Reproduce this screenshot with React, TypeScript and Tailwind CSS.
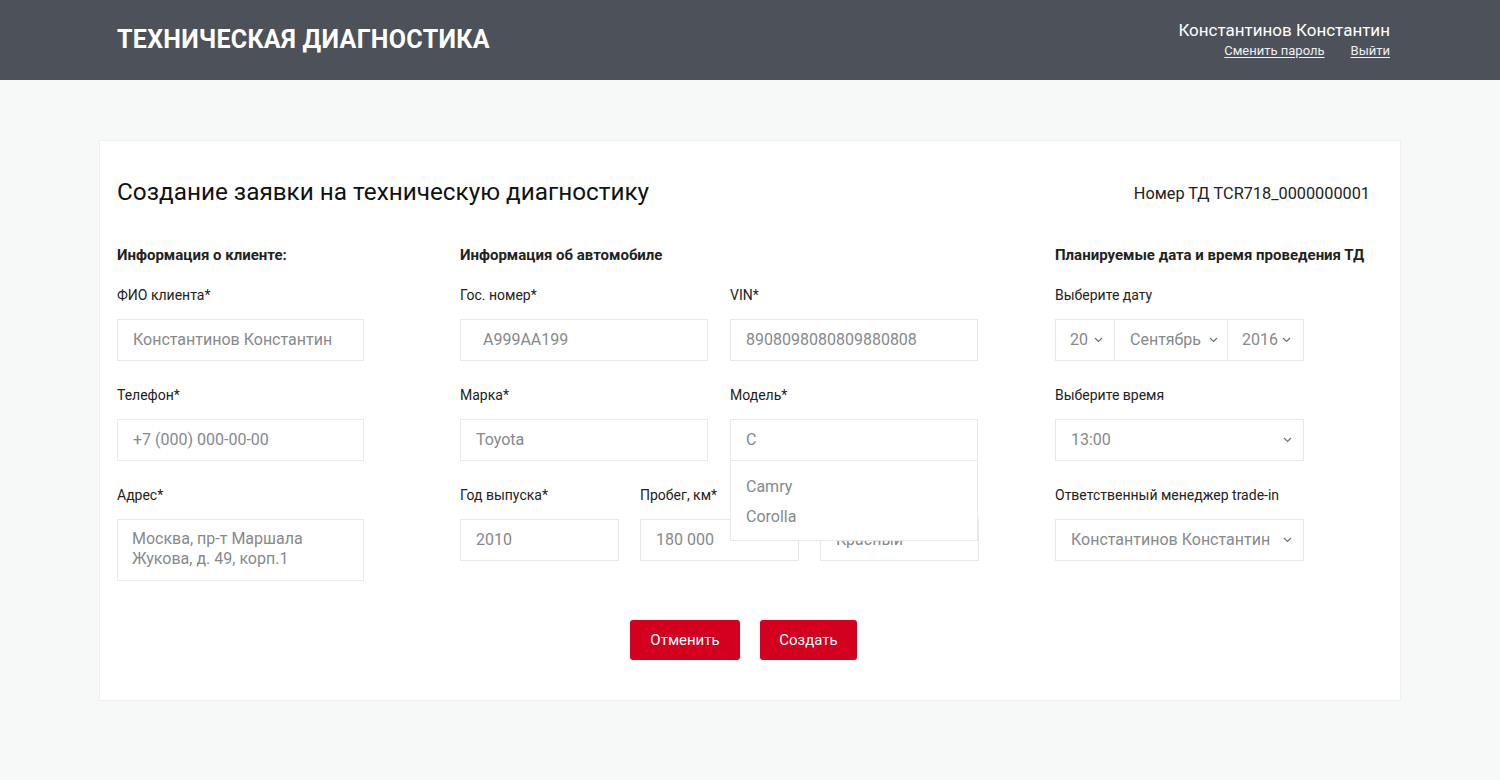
import React from 'react'

const font = { fontFamily: 'Roboto, "Noto Sans", sans-serif' }

function Chevron() {
  return (
    <svg width="9" height="6" viewBox="0 0 9 6" fill="none" className="shrink-0">
      <path d="M1 1l3.5 3.5L8 1" stroke="#6b6f75" strokeWidth="1.2" />
    </svg>
  )
}

function Label({ children }: { children: React.ReactNode }) {
  return <div className="h-[24px] text-[14px] leading-[24px] text-[#222] whitespace-nowrap">{children}</div>
}

function Input({ value, className = '' }: { value: string; className?: string }) {
  return (
    <div className={`h-[42px] border border-[#e8e8e8] bg-white px-[15px] flex items-center text-[16px] text-[#86898d] whitespace-nowrap ${className}`}>
      {value}
    </div>
  )
}

function Field({ label, value, className = '' }: { label: string; value: string; className?: string }) {
  return (
    <div className={`shrink-0 ${className}`}>
      <Label>{label}</Label>
      <div className="mt-[12px]">
        <Input value={value} />
      </div>
    </div>
  )
}

export default function App() {
  return (
    <div style={font} className="min-h-[780px] bg-[#f7f9f8]">
      <header className="h-[80px] bg-[#4d515a] flex items-center justify-between pl-[117px] pr-[110px]">
        <div className="text-white font-bold text-[25px] tracking-[0.3px]">ТЕХНИЧЕСКАЯ ДИАГНОСТИКА</div>
        <div className="flex flex-col items-end -mt-[2px]">
          <div className="text-white text-[17px] leading-[22px]">Константинов Константин</div>
          <div className="flex gap-[26px] text-[13px] leading-[18px] text-[#eef0f2] mt-[1px]">
            <span className="underline underline-offset-2">Сменить пароль</span>
            <span className="underline underline-offset-2">Выйти</span>
          </div>
        </div>
      </header>

      <div className="pt-[60px] px-[99px]">
        <div className="bg-white border border-[#eef0ef] h-[561px] pl-[17px] pr-[30px] pt-[33px]">
          <div className="flex items-center justify-between">
            <h1 className="text-[24.3px] leading-[36px] text-[#111]">Создание заявки на техническую диагностику</h1>
            <div className="text-[16.3px] text-[#222] mt-[5px]">Номер ТД TCR718_0000000001</div>
          </div>

          <div className="flex mt-[33px]">
            {/* client */}
            <div className="w-[247px] shrink-0">
              <div className="text-[15px] font-bold text-[#222] leading-[24px]">Информация о клиенте:</div>
              <div className="mt-[16px] flex flex-col gap-[22px]">
                <Field label="ФИО клиента*" value="Константинов Константин" />
                <Field label="Телефон*" value="+7 (000) 000-00-00" />
                <div>
                  <Label>Адрес*</Label>
                  <div className="mt-[12px] h-[62px] border border-[#e8e8e8] px-[14px] pt-[9px] text-[16px] leading-[20px] text-[#86898d]">
                    Москва, пр-т Маршала
                    <br />
                    Жукова, д. 49, корп.1
                  </div>
                </div>
              </div>
            </div>

            {/* car */}
            <div className="w-[518px] shrink-0 ml-[96px]">
              <div className="text-[15px] font-bold text-[#222] leading-[24px]">Информация об автомобиле</div>
              <div className="mt-[16px] flex flex-col gap-[22px]">
                <div className="flex gap-[22px]">
                  <div className="w-[248px] shrink-0">
                    <Label>Гос. номер*</Label>
                    <div className="mt-[12px]">
                      <Input value="A999AA199" className="pl-[22px]" />
                    </div>
                  </div>
                  <Field className="w-[248px]" label="VIN*" value="8908098080809880808" />
                </div>
                <div className="flex gap-[22px]">
                  <Field className="w-[248px]" label="Марка*" value="Toyota" />
                  <div className="w-[248px] shrink-0 relative">
                    <Label>Модель*</Label>
                    <div className="mt-[12px]">
                      <Input value="C" />
                    </div>
                    <div className="absolute left-0 right-0 top-[77px] z-10 h-[81px] bg-white border border-[#e8e8e8] px-[15px] pt-[11px] text-[16px] leading-[30px] text-[#86898d]">
                      <div>Camry</div>
                      <div>Corolla</div>
                    </div>
                  </div>
                </div>
                <div className="flex gap-[21px]">
                  <Field className="w-[159px]" label="Год выпуска*" value="2010" />
                  <Field className="w-[159px]" label="Пробег, км*" value="180 000" />
                  <Field className="w-[159px]" label="Цвет*" value="Красный" />
                </div>
              </div>
            </div>

            {/* date */}
            <div className="flex-1 ml-[77px]">
              <div className="text-[15px] font-bold text-[#222] leading-[24px] whitespace-nowrap">Планируемые дата и время проведения ТД</div>
              <div className="mt-[16px] flex flex-col gap-[22px] w-[249px]">
                <div>
                  <Label>Выберите дату</Label>
                  <div className="mt-[12px] flex h-[42px] border border-[#e8e8e8] text-[16px] text-[#86898d]">
                    <div className="w-[59px] flex items-center gap-[6px] pl-[14px] border-r border-[#e8e8e8]">
                      20 <Chevron />
                    </div>
                    <div className="w-[113px] flex items-center gap-[8px] pl-[15px] border-r border-[#e8e8e8]">
                      Сентябрь <Chevron />
                    </div>
                    <div className="flex-1 flex items-center gap-[4px] pl-[14px]">
                      2016 <Chevron />
                    </div>
                  </div>
                </div>
                <div>
                  <Label>Выберите время</Label>
                  <div className="mt-[12px] h-[42px] border border-[#e8e8e8] flex items-center justify-between pl-[15px] pr-[11px] text-[16px] text-[#86898d]">
                    13:00 <Chevron />
                  </div>
                </div>
                <div>
                  <Label>Ответственный менеджер trade-in</Label>
                  <div className="mt-[12px] h-[42px] border border-[#e8e8e8] flex items-center justify-between pl-[15px] pr-[11px] text-[16px] text-[#86898d] whitespace-nowrap">
                    Константинов Константин <Chevron />
                  </div>
                </div>
              </div>
            </div>
          </div>

          <div className="flex justify-center gap-[20px] mt-[39px]">
            <button className="w-[110px] h-[40px] rounded-[3px] bg-[#d3001f] text-white text-[15px]">Отменить</button>
            <button className="w-[97px] h-[40px] rounded-[3px] bg-[#d3001f] text-white text-[15px]">Создать</button>
          </div>
        </div>
      </div>
    </div>
  )
}
